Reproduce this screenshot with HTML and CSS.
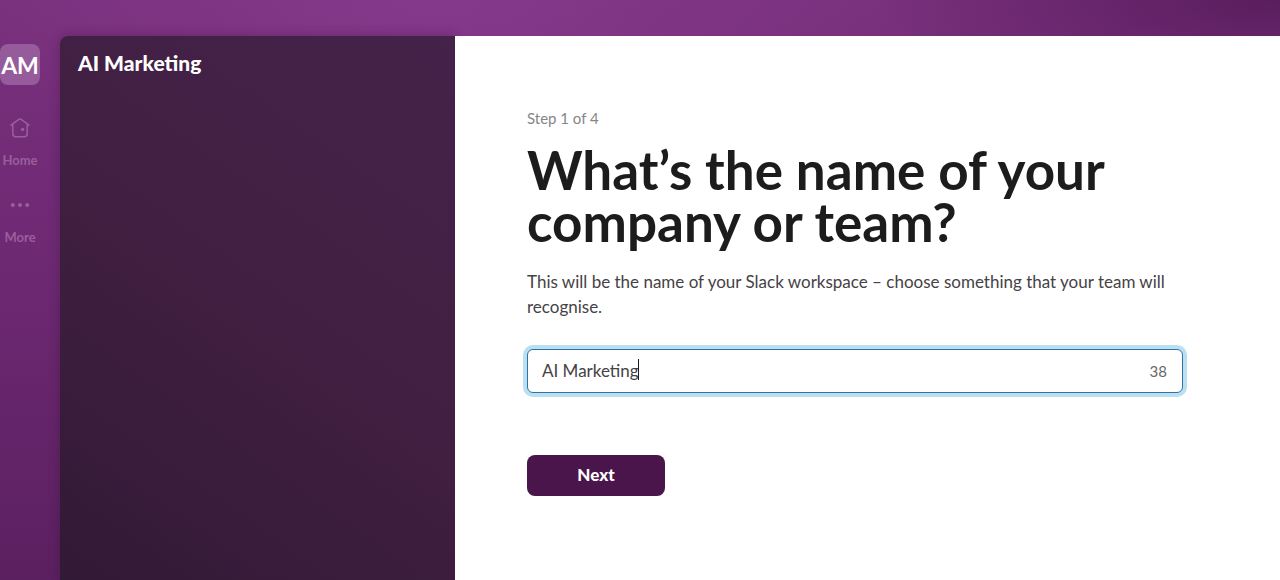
FILE: index.html
```html
<!DOCTYPE html>
<html lang="en-GB">
<head>
    <meta charset="UTF-8">
    <meta name="viewport" content="width=device-width, initial-scale=1.0">
    <title>Create a workspace</title>
    <link rel="stylesheet" href="styles.css">
</head>
<body>

    <div class="app">
        <nav class="rail">
            <div class="team-icon">AM</div>
            <a class="rail-item" href="#home">
                <svg width="20" height="20" viewBox="0 0 20 20" fill="none" stroke="currentColor" stroke-width="1.5" stroke-linecap="round" stroke-linejoin="round">
                    <path d="M1 7.2 9.2 1.2a1.4 1.4 0 0 1 1.6 0L19 7.2M2.8 6v9.8a3 3 0 0 0 3 3h8.4a3 3 0 0 0 3-3V6"/>
                    <circle cx="12.6" cy="11.4" r="1.7" fill="currentColor" stroke="none"/>
                </svg>
                <span>Home</span>
            </a>
            <a class="rail-item" href="#more">
                <svg width="20" height="20" viewBox="0 0 20 20" fill="currentColor">
                    <circle cx="2.8" cy="10" r="2"/>
                    <circle cx="10" cy="10" r="2"/>
                    <circle cx="17.2" cy="10" r="2"/>
                </svg>
                <span>More</span>
            </a>
        </nav>

        <aside class="sidebar">
            <div class="workspace-name">AI Marketing</div>
        </aside>

        <main class="content">
            <form class="setup">
                <p class="step">Step 1 of 4</p>
                <h1><label for="team-name">What’s the name of your company or team?</label></h1>
                <p class="hint" id="hint">This will be the name of your Slack workspace – choose something that your team will recognise.</p>
                <div class="field">
                    <input type="text" id="team-name" value="AI Marketing" maxlength="50" autocomplete="off" spellcheck="false" aria-describedby="hint">
                    <span class="caret" id="caret"></span>
                    <span class="count" id="count">38</span>
                </div>
                <button type="submit" class="next">Next</button>
            </form>
        </main>
    </div>

    <script>
        const input = document.getElementById('team-name');
        const count = document.getElementById('count');
        const caret = document.getElementById('caret');

        // switch back to the browser's own caret once the user types or moves it
        function useNativeCaret() {
            caret.hidden = true;
            input.style.caretColor = 'auto';
        }

        input.addEventListener('input', function () {
            count.textContent = input.maxLength - input.value.length;
        });
        input.focus();
        input.setSelectionRange(input.value.length, input.value.length);
        input.addEventListener('keydown', useNativeCaret);
        input.addEventListener('mousedown', useNativeCaret);
        input.addEventListener('blur', useNativeCaret);
    </script>
</body>
</html>
```
FILE: styles.css
```css
* {
    box-sizing: border-box;
}
body {
    margin: 0;
    font-family: Lato, 'Liberation Sans', sans-serif;
    background-color: #702c74;
    background-image:
        radial-gradient(ellipse 400px 110px at 100% 0, #5a1d5d, transparent),
        radial-gradient(ellipse 500px 180px at 440px 0, #85398b, transparent),
        linear-gradient(#78307c, #702a75 40%, #5b2060);
}
.app {
    display: flex;
    min-height: 100vh;
    padding-top: 36px;
}
.rail {
    display: flex;
    flex-direction: column;
    align-items: center;
    flex: none;
    width: 60px;
    padding: 8px 20px 0 0;
}
.team-icon {
    width: 40px;
    height: 41px;
    margin-bottom: 33px;
    border-radius: 8px;
    background: #955b9a;
    color: #fff;
    font-size: 23px;
    font-weight: 700;
    line-height: 42px;
    text-align: center;
}
.rail-item {
    display: flex;
    flex-direction: column;
    align-items: center;
    gap: 14px;
    margin-bottom: 27px;
    color: #985f9c;
    font-size: 13px;
    font-weight: 700;
    line-height: 16px;
    text-decoration: none;
}
.sidebar {
    flex: none;
    width: 395px;
    padding: 13px 18px;
    border-radius: 8px 0 0 0;
    background: linear-gradient(215deg, #452249, #411f42 50%, #321935);
    box-shadow: 0 0 12px rgba(40, 10, 45, 0.3);
}
.workspace-name {
    color: #fff;
    font-size: 21px;
    font-weight: 900;
    line-height: 28px;
}
.content {
    flex: 1;
    position: relative;
    padding: 72px 72px 40px;
    background: #fff;
}
.setup {
    max-width: 656px;
}
.step {
    margin: 0 0 16px;
    color: #868686;
    font-size: 15px;
    line-height: 20px;
}
h1 {
    margin: 0 0 21px;
    color: #1d1c1d;
    font-size: 53px;
    font-weight: 700;
    line-height: 52px;
}
.hint {
    margin: 0 0 30px;
    color: #454245;
    font-size: 17px;
    line-height: 25px;
}
.field {
    position: relative;
    margin-bottom: 62px;
}
.field input {
    display: block;
    width: 100%;
    height: 44px;
    padding: 0 56px 2px 14px;
    border: 1px solid #868686;
    border-radius: 6px;
    background: #fff;
    color: #454245;
    caret-color: transparent;
    font-family: inherit;
    font-size: 17px;
}
.field input:focus {
    border-color: #2f72a5;
    outline: none;
    box-shadow: 0 0 0 4px #b9dff0;
}
.caret {
    position: absolute;
    top: 10px;
    left: 111px;
    width: 1px;
    height: 21px;
    background: #1d1c1d;
}
.count {
    position: absolute;
    top: 12px;
    right: 16px;
    color: #696969;
    font-size: 15px;
    line-height: 20px;
}
.next {
    width: 138px;
    height: 41px;
    padding: 0 0 2px;
    border: 0;
    border-radius: 8px;
    background: #4a154b;
    color: #fff;
    font-family: inherit;
    font-size: 17px;
    font-weight: 900;
}
```
